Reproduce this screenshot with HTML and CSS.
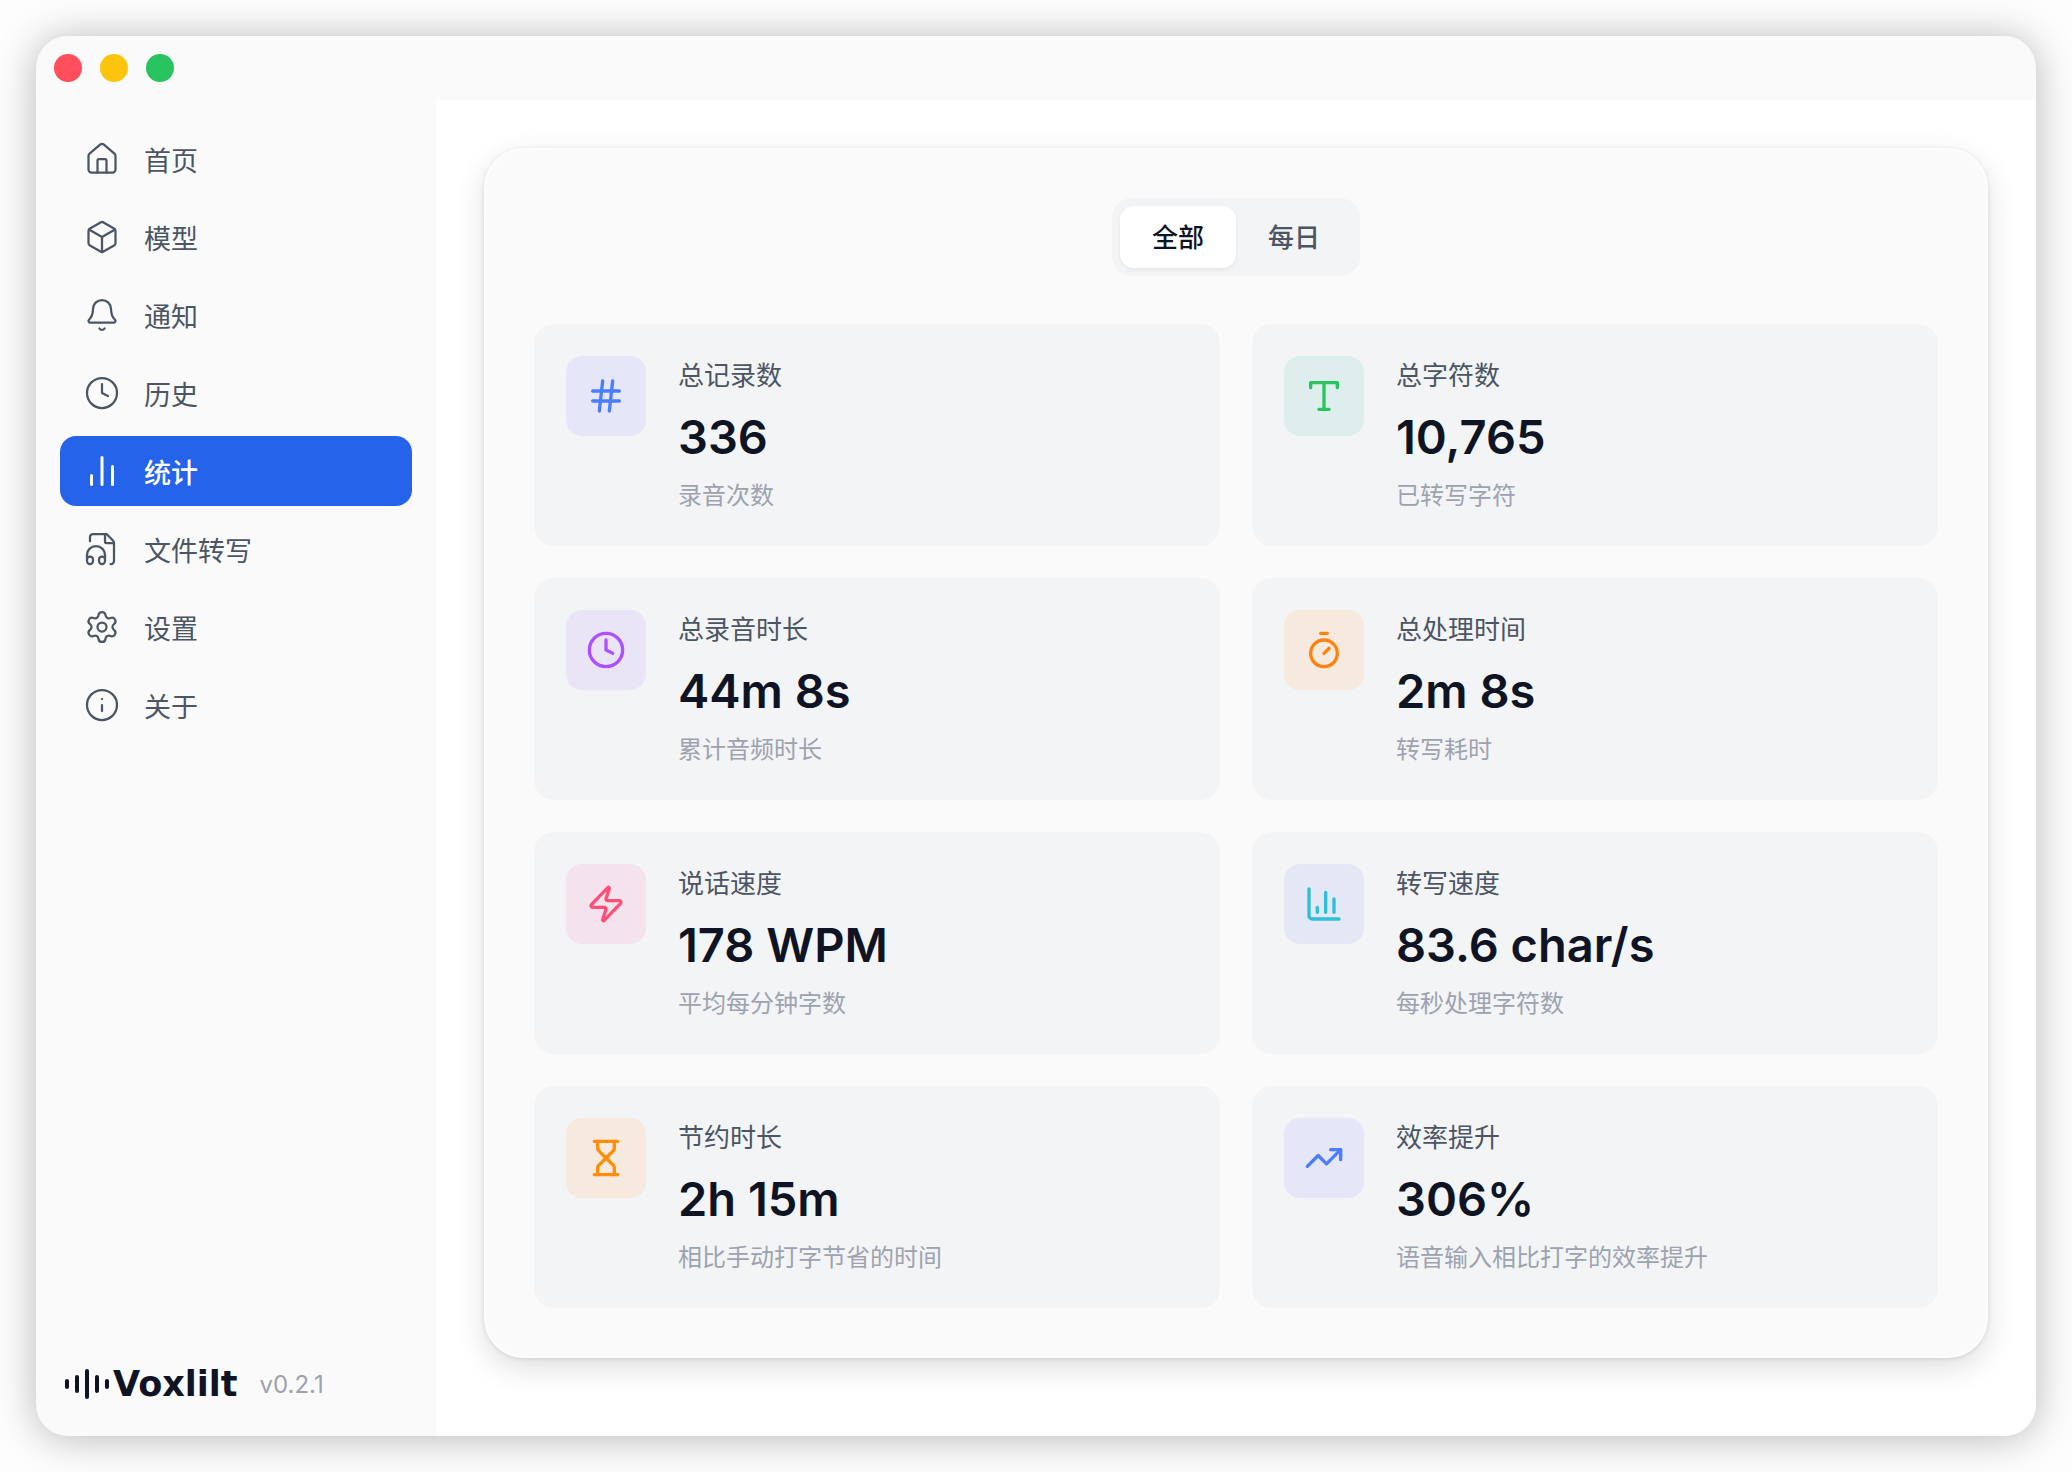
FILE: index.html
```html
<!DOCTYPE html>
<html lang="zh-CN">
<head>
    <meta charset="UTF-8">
    <meta name="viewport" content="width=device-width, initial-scale=1.0">
    <title>Voxlilt</title>
    <link rel="stylesheet" href="styles.css">
</head>
<body>
    <div class="window">
        <header class="titlebar">
            <button class="dot dot-red" aria-label="关闭"></button>
            <button class="dot dot-yellow" aria-label="最小化"></button>
            <button class="dot dot-green" aria-label="最大化"></button>
        </header>
        <div class="body">
            <aside class="sidebar">
                <nav class="nav">
                    <a href="#home" class="nav-item">
                        <svg class="icon" viewBox="0 0 24 24"><path d="M15 21v-8a1 1 0 0 0-1-1h-4a1 1 0 0 0-1 1v8"/><path d="M3 10a2 2 0 0 1 .709-1.528l7-5.999a2 2 0 0 1 2.582 0l7 5.999A2 2 0 0 1 21 10v9a2 2 0 0 1-2 2H5a2 2 0 0 1-2-2z"/></svg>
                        <span>首页</span>
                    </a>
                    <a href="#models" class="nav-item">
                        <svg class="icon" viewBox="0 0 24 24"><path d="M21 8a2 2 0 0 0-1-1.73l-7-4a2 2 0 0 0-2 0l-7 4A2 2 0 0 0 3 8v8a2 2 0 0 0 1 1.73l7 4a2 2 0 0 0 2 0l7-4A2 2 0 0 0 21 16Z"/><path d="m3.3 7 8.7 5 8.7-5"/><path d="M12 22V12"/></svg>
                        <span>模型</span>
                    </a>
                    <a href="#notice" class="nav-item">
                        <svg class="icon" viewBox="0 0 24 24"><path d="M10.268 21a2 2 0 0 0 3.464 0"/><path d="M3.262 15.326A1 1 0 0 0 4 17h16a1 1 0 0 0 .74-1.673C19.41 13.956 18 12.499 18 8A6 6 0 0 0 6 8c0 4.499-1.411 5.956-2.738 7.326"/></svg>
                        <span>通知</span>
                    </a>
                    <a href="#history" class="nav-item">
                        <svg class="icon" viewBox="0 0 24 24"><circle cx="12" cy="12" r="10"/><path d="M12 6v6l4 2"/></svg>
                        <span>历史</span>
                    </a>
                    <a href="#stats" class="nav-item active" aria-current="page">
                        <svg class="icon" viewBox="0 0 24 24"><path d="M5 21v-6"/><path d="M12 21V3"/><path d="M19 21V9"/></svg>
                        <span>统计</span>
                    </a>
                    <a href="#files" class="nav-item">
                        <svg class="icon" viewBox="0 0 24 24"><path d="M4 6.835V4a2 2 0 0 1 2-2h8a2.4 2.4 0 0 1 1.706.706l3.588 3.588A2.4 2.4 0 0 1 20 8v12a2 2 0 0 1-2 2h-.343"/><path d="M14 2v5a1 1 0 0 0 1 1h5"/><path d="M2 19a2 2 0 0 1 4 0v1a2 2 0 0 1-4 0v-4a6 6 0 0 1 12 0v4a2 2 0 0 1-4 0v-1a2 2 0 0 1 4 0"/></svg>
                        <span>文件转写</span>
                    </a>
                    <a href="#settings" class="nav-item">
                        <svg class="icon" viewBox="0 0 24 24"><path d="M9.671 4.136a2.34 2.34 0 0 1 4.659 0 2.34 2.34 0 0 0 3.319 1.915 2.34 2.34 0 0 1 2.33 4.033 2.34 2.34 0 0 0 0 3.831 2.34 2.34 0 0 1-2.33 4.033 2.34 2.34 0 0 0-3.319 1.915 2.34 2.34 0 0 1-4.659 0 2.34 2.34 0 0 0-3.32-1.915 2.34 2.34 0 0 1-2.33-4.033 2.34 2.34 0 0 0 0-3.831A2.34 2.34 0 0 1 6.35 6.051a2.34 2.34 0 0 0 3.319-1.915"/><circle cx="12" cy="12" r="3"/></svg>
                        <span>设置</span>
                    </a>
                    <a href="#about" class="nav-item">
                        <svg class="icon" viewBox="0 0 24 24"><circle cx="12" cy="12" r="10"/><path d="M12 16v-4"/><path d="M12 8h.01"/></svg>
                        <span>关于</span>
                    </a>
                </nav>
                <footer class="brand">
                    <svg class="wave" viewBox="0 0 44 30"><path d="M2 12v6M12 8v14M22 2v26M32 8v14M42 12v6"/></svg>
                    <span class="brand-name">Voxlilt</span>
                    <span class="version">v0.2.1</span>
                </footer>
            </aside>
            <main class="main">
                <section class="panel">
                    <div class="tabs">
                        <button class="tab selected">全部</button>
                        <button class="tab">每日</button>
                    </div>
                    <div class="grid">
                        <div class="card">
                            <div class="badge blue"><svg class="icon" viewBox="0 0 24 24"><path d="M4 9h16"/><path d="M4 15h16"/><path d="M10 3 8 21"/><path d="m16 3-2 18"/></svg></div>
                            <div class="info">
                                <div class="label">总记录数</div>
                                <div class="value">336</div>
                                <div class="desc">录音次数</div>
                            </div>
                        </div>
                        <div class="card">
                            <div class="badge green"><svg class="icon" viewBox="0 0 24 24"><path d="M4 7V4h16v3"/><path d="M9 20h6"/><path d="M12 4v16"/></svg></div>
                            <div class="info">
                                <div class="label">总字符数</div>
                                <div class="value">10,765</div>
                                <div class="desc">已转写字符</div>
                            </div>
                        </div>
                        <div class="card">
                            <div class="badge purple"><svg class="icon" viewBox="0 0 24 24"><circle cx="12" cy="12" r="10"/><path d="M12 6v6l4 2"/></svg></div>
                            <div class="info">
                                <div class="label">总录音时长</div>
                                <div class="value">44m 8s</div>
                                <div class="desc">累计音频时长</div>
                            </div>
                        </div>
                        <div class="card">
                            <div class="badge orange"><svg class="icon" viewBox="0 0 24 24"><path d="M10 2h4"/><path d="m12 14 3-3"/><circle cx="12" cy="14" r="8"/></svg></div>
                            <div class="info">
                                <div class="label">总处理时间</div>
                                <div class="value">2m 8s</div>
                                <div class="desc">转写耗时</div>
                            </div>
                        </div>
                        <div class="card">
                            <div class="badge rose"><svg class="icon" viewBox="0 0 24 24"><path d="M4 14a1 1 0 0 1-.78-1.63l9.9-10.2a.5.5 0 0 1 .86.46l-1.92 6.02A1 1 0 0 0 13 10h7a1 1 0 0 1 .78 1.63l-9.9 10.2a.5.5 0 0 1-.86-.46l1.92-6.02A1 1 0 0 0 11 14z"/></svg></div>
                            <div class="info">
                                <div class="label">说话速度</div>
                                <div class="value">178 WPM</div>
                                <div class="desc">平均每分钟字数</div>
                            </div>
                        </div>
                        <div class="card">
                            <div class="badge cyan"><svg class="icon" viewBox="0 0 24 24"><path d="M3 3v16a2 2 0 0 0 2 2h16"/><path d="M18 17V9"/><path d="M13 17V5"/><path d="M8 17v-3"/></svg></div>
                            <div class="info">
                                <div class="label">转写速度</div>
                                <div class="value">83.6 char/s</div>
                                <div class="desc">每秒处理字符数</div>
                            </div>
                        </div>
                        <div class="card">
                            <div class="badge amber"><svg class="icon" viewBox="0 0 24 24"><path d="M5 22h14"/><path d="M5 2h14"/><path d="M17 22v-4.172a2 2 0 0 0-.586-1.414L12 12l-4.414 4.414A2 2 0 0 0 7 17.828V22"/><path d="M7 2v4.172a2 2 0 0 0 .586 1.414L12 12l4.414-4.414A2 2 0 0 0 17 6.172V2"/></svg></div>
                            <div class="info">
                                <div class="label">节约时长</div>
                                <div class="value">2h 15m</div>
                                <div class="desc">相比手动打字节省的时间</div>
                            </div>
                        </div>
                        <div class="card">
                            <div class="badge blue"><svg class="icon" viewBox="0 0 24 24"><path d="m22 7-8.5 8.5-5-5L2 17"/><path d="M16 7h6v6"/></svg></div>
                            <div class="info">
                                <div class="label">效率提升</div>
                                <div class="value">306%</div>
                                <div class="desc">语音输入相比打字的效率提升</div>
                            </div>
                        </div>
                    </div>
                </section>
            </main>
        </div>
    </div>
</body>
</html>
```
FILE: styles.css
```css
* {
    margin: 0;
    padding: 0;
    box-sizing: border-box;
}

body {
    min-height: 100vh;
    display: flex;
    padding: 36px;
    background: #fdfdfd;
    font-family: Inter, "Noto Sans CJK SC", sans-serif;
    color: #4b5563;
}

button {
    border: none;
    font: inherit;
    color: inherit;
    cursor: pointer;
}

.window {
    flex: 1;
    display: flex;
    flex-direction: column;
    overflow: hidden;
    border-radius: 32px;
    background: #fafafa;
    box-shadow: 0 2px 40px rgba(0, 0, 0, 0.28);
}

.titlebar {
    display: flex;
    gap: 18px;
    padding: 18px 18px;
    height: 64px;
}

.dot {
    width: 28px;
    height: 28px;
    border-radius: 50%;
}

.dot-red {
    background: #ff4d5c;
}

.dot-yellow {
    background: #fac50c;
}

.dot-green {
    background: #29c45f;
}

.body {
    flex: 1;
    display: flex;
}

.sidebar {
    width: 400px;
    flex-shrink: 0;
    display: flex;
    flex-direction: column;
    justify-content: space-between;
    padding: 24px;
}

.nav {
    display: flex;
    flex-direction: column;
    gap: 8px;
}

.nav-item {
    display: flex;
    align-items: center;
    gap: 24px;
    height: 70px;
    padding: 0 24px;
    border-radius: 16px;
    font-size: 27px;
    color: #4b5563;
    text-decoration: none;
}

.nav-item.active {
    background: #2563eb;
    color: #fff;
    font-weight: 500;
}

.icon {
    width: 36px;
    height: 36px;
    fill: none;
    stroke: currentColor;
    stroke-width: 1.5;
    stroke-linecap: round;
    stroke-linejoin: round;
}

.nav-item.active .icon {
    stroke-width: 2;
}

.brand {
    display: flex;
    align-items: center;
    gap: 4px;
    height: 56px;
    padding-left: 5px;
}

.wave {
    width: 44px;
    height: 30px;
    fill: none;
    stroke: #0f1424;
    stroke-width: 4;
    stroke-linecap: round;
}

.brand-name {
    font-family: "DejaVu Sans", sans-serif;
    font-size: 35px;
    font-weight: 700;
    color: #0f1424;
}

.version {
    margin-left: 18px;
    font-size: 24px;
    color: #9ca3af;
}

.main {
    flex: 1;
    padding: 48px;
    background: #fff;
}

.panel {
    display: flex;
    flex-direction: column;
    align-items: center;
    gap: 48px;
    padding: 48px;
    border: 2px solid #fdfdfd;
    border-radius: 40px;
    background: #fafafa;
    box-shadow: 0 10px 30px rgba(0, 0, 0, 0.13), 0 1px 4px rgba(0, 0, 0, 0.1);
}

.tabs {
    display: flex;
    padding: 8px;
    border-radius: 20px;
    background: #f3f4f6;
}

.tab {
    height: 62px;
    padding: 0 32px 4px;
    border-radius: 14px;
    background: transparent;
    font-size: 26px;
    font-weight: 500;
}

.tab.selected {
    background: #fff;
    color: #0f1424;
    box-shadow: 0 2px 4px rgba(0, 0, 0, 0.06);
}

.grid {
    display: grid;
    grid-template-columns: 1fr 1fr;
    gap: 32px;
    width: 100%;
}

.card {
    display: flex;
    gap: 32px;
    padding: 32px;
    border-radius: 20px;
    background: #f3f4f6;
}

.badge {
    display: flex;
    align-items: center;
    justify-content: center;
    width: 80px;
    height: 80px;
    border-radius: 16px;
}

.badge .icon {
    width: 40px;
    height: 40px;
    stroke-width: 2;
}

.blue {
    background: #e5e6f8;
    color: #4b7dff;
}

.green {
    background: #deeeed;
    color: #29c45f;
}

.purple {
    background: #e9e5f6;
    color: #ad50ff;
}

.orange {
    background: #f6e9de;
    color: #ff810f;
}

.rose {
    background: #f4e2ec;
    color: #ff4f77;
}

.cyan {
    background: #e4e8f5;
    color: #2cc0da;
}

.amber {
    background: #f6e9de;
    color: #ff8d05;
}

.info {
    display: flex;
    flex-direction: column;
    gap: 8px;
}

.label {
    font-size: 26px;
    line-height: 40px;
}

.value {
    font-size: 47px;
    font-weight: 600;
    line-height: 66px;
    color: #0f1424;
}

.desc {
    font-size: 24px;
    line-height: 36px;
    color: #9ca3af;
}
```
